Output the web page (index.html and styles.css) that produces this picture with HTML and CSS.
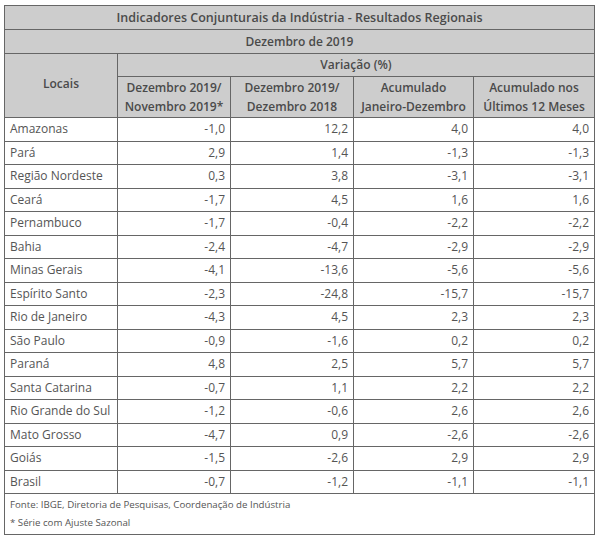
FILE: index.html
```html
<!DOCTYPE html>
<html lang="pt-BR">
<head>
<meta charset="utf-8">
<link rel="stylesheet" href="styles.css">
</head>
<body>
<table class="ind">
  <colgroup>
    <col class="c1"><col class="c2"><col class="c3"><col class="c4"><col class="c5">
  </colgroup>
  <thead>
    <tr class="h-title"><th colspan="5">Indicadores Conjunturais da Indústria - Resultados Regionais</th></tr>
    <tr class="h-date"><th colspan="5">Dezembro de 2019</th></tr>
    <tr class="h-var"><th rowspan="2" class="locais">Locais</th><th colspan="4">Variação (%)</th></tr>
    <tr class="h-sub">
      <th>Dezembro 2019/<br>Novembro 2019*</th>
      <th>Dezembro 2019/<br>Dezembro 2018</th>
      <th>Acumulado<br>Janeiro-Dezembro</th>
      <th>Acumulado nos<br>Últimos 12 Meses</th>
    </tr>
  </thead>
  <tbody>
    <tr><td>Amazonas</td><td>-1,0</td><td>12,2</td><td>4,0</td><td>4,0</td></tr>
    <tr><td>Pará</td><td>2,9</td><td>1,4</td><td>-1,3</td><td>-1,3</td></tr>
    <tr><td>Região Nordeste</td><td>0,3</td><td>3,8</td><td>-3,1</td><td>-3,1</td></tr>
    <tr><td>Ceará</td><td>-1,7</td><td>4,5</td><td>1,6</td><td>1,6</td></tr>
    <tr><td>Pernambuco</td><td>-1,7</td><td>-0,4</td><td>-2,2</td><td>-2,2</td></tr>
    <tr><td>Bahia</td><td>-2,4</td><td>-4,7</td><td>-2,9</td><td>-2,9</td></tr>
    <tr><td>Minas Gerais</td><td>-4,1</td><td>-13,6</td><td>-5,6</td><td>-5,6</td></tr>
    <tr><td>Espírito Santo</td><td>-2,3</td><td>-24,8</td><td>-15,7</td><td>-15,7</td></tr>
    <tr><td>Rio de Janeiro</td><td>-4,3</td><td>4,5</td><td>2,3</td><td>2,3</td></tr>
    <tr><td>São Paulo</td><td>-0,9</td><td>-1,6</td><td>0,2</td><td>0,2</td></tr>
    <tr><td>Paraná</td><td>4,8</td><td>2,5</td><td>5,7</td><td>5,7</td></tr>
    <tr><td>Santa Catarina</td><td>-0,7</td><td>1,1</td><td>2,2</td><td>2,2</td></tr>
    <tr><td>Rio Grande do Sul</td><td>-1,2</td><td>-0,6</td><td>2,6</td><td>2,6</td></tr>
    <tr><td>Mato Grosso</td><td>-4,7</td><td>0,9</td><td>-2,6</td><td>-2,6</td></tr>
    <tr><td>Goiás</td><td>-1,5</td><td>-2,6</td><td>2,9</td><td>2,9</td></tr>
    <tr><td>Brasil</td><td>-0,7</td><td>-1,2</td><td>-1,1</td><td>-1,1</td></tr>
  </tbody>
  <tfoot>
    <tr><td colspan="5" class="foot">
      <div>Fonte: IBGE, Diretoria de Pesquisas, Coordenação de Indústria</div>
      <div>* Série com Ajuste Sazonal</div>
    </td></tr>
  </tfoot>
</table>
</body>
</html>
```

FILE: styles.css
```css
html, body {
  margin: 0;
  padding: 0;
  background: #ffffff;
}
body {
  padding: 5px 0 0 4px;
  font-family: "Open Sans", "DejaVu Sans", sans-serif;
  color: #555555;
}
.ind {
  border-collapse: collapse;
  table-layout: fixed;
  width: 590px;
  font-size: 12px;
}
.c1 { width: 113px; }
.c2 { width: 113px; }
.c3 { width: 123px; }
.c4 { width: 120px; }
.c5 { width: 121px; }
.ind th,
.ind td {
  border: 1px solid #666666;
  padding: 0 5px;
  white-space: nowrap;
}
.ind th {
  background: #cdcdcd;
  color: #4a4a4a;
  font-weight: 600;
  text-align: center;
  line-height: 20px;
  padding: 0 2px;
}
.h-title th { height: 23px; font-size: 12.5px; }
.h-date th { height: 23px; }
.h-var th { height: 22px; }
.h-sub th { height: 40px; line-height: 19px; }
.ind th.locais { vertical-align: middle; padding-bottom: 4px; }
.ind tbody td {
  height: 22.5px;
  line-height: 18px;
  text-align: right;
  color: #555555;
}
.ind tbody td:first-child {
  text-align: left;
}
.ind td.foot {
  height: 40px;
  font-size: 9.7px;
  line-height: 18px;
  text-align: left;
  vertical-align: middle;
  color: #555555;
}
```
